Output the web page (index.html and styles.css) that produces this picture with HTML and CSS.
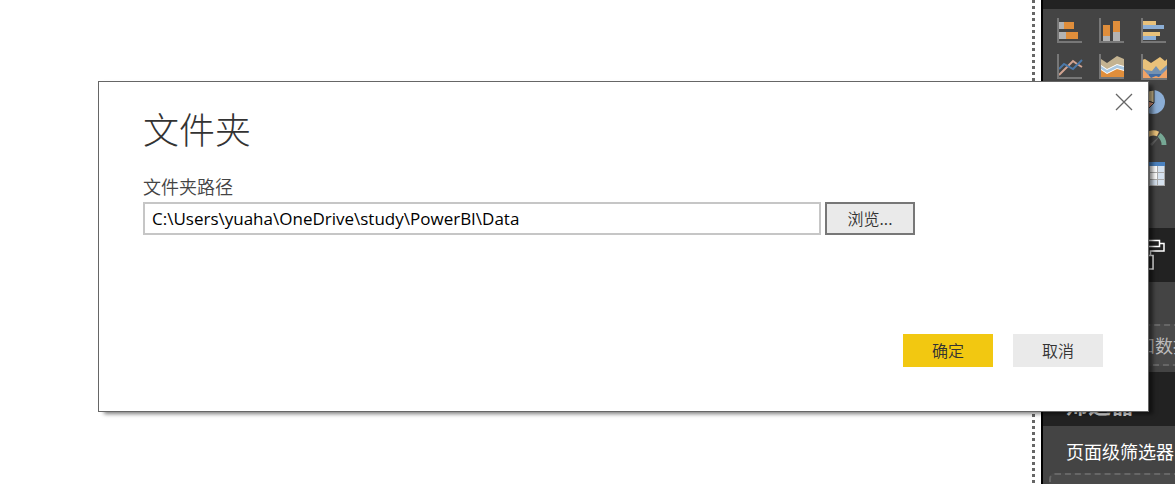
FILE: index.html
```html
<!DOCTYPE html>
<html lang="zh-CN">
<head>
<meta charset="utf-8">
<title>文件夹</title>
<link rel="stylesheet" href="styles.css">
</head>
<body>
<div class="workspace">
  <main class="canvas">
    <svg class="canvas-edge" aria-hidden="true"><defs><pattern id="dots" width="3" height="6" patternUnits="userSpaceOnUse"><rect width="3" height="3" fill="#666"/></pattern></defs><rect width="3" height="100%" fill="url(#dots)"/></svg>
  </main>
  <aside class="panel">
    <div class="panel-top"></div>
    <div class="visuals">
      <svg viewBox="0 0 26 26"><path fill="#b3b3b3" d="M2 4h5v7H2zM2 14h7v7H2z"/><path fill="#e08e3b" d="M7 4h10v7H7zM9 14h12v7H9z"/><path class="axis" d="M1 0v24h24"/></svg>
      <svg viewBox="0 0 26 26"><path fill="#b3b3b3" d="M4 18h7v5H4zM14 14h7v9h-7z"/><path fill="#e08e3b" d="M4 7h7v11H4zM14 3h7v11h-7z"/><path class="axis" d="M1 0v24h24"/></svg>
      <svg viewBox="0 0 26 26"><path fill="#e9c17a" d="M2 3h13v4H2zM2 14h17v4H2z"/><path fill="#8caed5" d="M2 7h21v4H2zM2 18h13v4H2z"/><path class="axis" d="M1 0v24h24"/></svg>
      <svg viewBox="0 0 26 26"><path class="line" stroke="#d2a391" d="M2 21L16 7l4 3 5 3"/><path class="line" stroke="#4b78a9" d="M2 15l5-5 9 5 9-9"/><path class="axis" d="M1 0v24h24"/></svg>
      <svg viewBox="0 0 26 26"><path fill="#c4b391" d="M2 5l6 4 10-7 7 3v19H2z"/><path fill="#fff" d="M2 11l6 4 10-5 7 2v12H2z"/><path fill="#a9c7df" d="M2 12l6 4 10-5 7 2v11H2z"/><path fill="#fff" d="M2 15l6 4 10-5 7 2v8H2z"/><path fill="#e08e3b" d="M2 16l6 4 10-5 7 2v7H2z"/><path class="axis" d="M1 0v24h24"/></svg>
      <svg viewBox="0 0 26 26"><path fill="#e9c17a" d="M1 6l3-1 6 4 9-6 5 4 2-2v19H1z"/><path fill="#7491b1" d="M1 14l4 2 6 1 4-5 4 5 7-6v13H1z"/><path fill="#416ca5" d="M8 20h12v4H8z"/><path fill="#f0a366" d="M1 14l9 10H1zM10 24l5-2 5 2zM17 24l9-9v9z"/><path class="axis" d="M1 0v25h25"/></svg>
      <svg class="col3" viewBox="0 0 26 26"><circle cx="12" cy="12" r="12" fill="#8caed5"/><path fill="#d8c394" stroke="#333" d="M13 13V0A12 12 0 0 0 1 9z"/><path fill="#e59c80" stroke="#333" d="M13 13L1 9l4 12z"/></svg>
      <svg class="col3" viewBox="0 0 26 26"><g fill="none" stroke-width="5"><path stroke="#8caed5" d="M2 19a11 11 0 0 1 3-8"/><path stroke="#e9c17a" d="M6 9a11 11 0 0 1 11-1"/><path stroke="#76a895" d="M18 9a12 12 0 0 1 5 10"/></g><path fill="#666" d="M9 18l10-8-8 10z"/></svg>
      <svg class="col3" viewBox="0 0 26 26"><path fill="#fff" d="M0 0h24v24H0z"/><path fill="#d6e2ef" d="M16 4h8v20h-8zM8 18h8v6H8z"/><path fill="#4b82c0" d="M0 0h24v4H0z"/><path fill="none" stroke="#aaa" d="M0 10.500h24M0 17.500h24M0 23.500h24M8.500 4v20M16.500 4v20M23.500 4v20"/></svg>
    </div>
    <div class="tabs">
      <svg viewBox="0 0 30 32" fill="none" stroke="#fff" stroke-width="1.500"><path d="M3 1.500h20.500v6H3M24 4.500h4V12H14.500v4M11 16.500h6V30h-6z"/></svg>
    </div>
    <section class="fields"><div class="drop-zone">和数据</div></section>
    <h2 class="filters-title">筛选器</h2>
    <section class="filters"><h3 class="filters-label">页面级筛选器</h3><div class="drop-zone"></div></section>
  </aside>
</div>
<div class="overlay">
  <form class="dialog" role="dialog" aria-labelledby="title">
    <button class="close" type="button" aria-label="关闭"><svg viewBox="0 0 18 18"><path d="M1 1l16 16M17 1L1 17" stroke="#666" stroke-width="1.300"/></svg></button>
    <h1 class="title" id="title">文件夹</h1>
    <label class="label" for="path">文件夹路径</label>
    <div class="path-row">
      <input class="path" id="path" type="text" value="C:\Users\yuaha\OneDrive\study\PowerBI\Data">
      <button class="button browse" type="button">浏览...</button>
    </div>
    <div class="actions">
      <button class="button primary" type="submit">确定</button>
      <button class="button" type="button">取消</button>
    </div>
  </form>
</div>
</body>
</html>
```
FILE: styles.css
```css
* { box-sizing: border-box; }
body {
  margin: 0;
  font-family: "Noto Sans CJK SC", sans-serif;
  background: #fff;
  color: #333;
}
h1, h2, h3 { margin: 0; font-weight: 400; }
.workspace {
  display: flex;
  height: 100vh;
  overflow: hidden;
}
.canvas {
  flex: 1;
  display: flex;
  justify-content: flex-end;
  padding-right: 6px;
}
.canvas-edge { width: 3px; height: 100%; }
.panel {
  width: 134px;
  border-left: 2px solid #000;
  background: #444;
  overflow: hidden;
  white-space: nowrap;
}
.panel-top { height: 9px; background: #222; }
.visuals {
  display: grid;
  grid-template-columns: repeat(3, 26px);
  gap: 10px 16px;
  height: 219px;
  padding: 9px 14px;
  align-content: start;
}
.visuals svg { width: 26px; height: 26px; }
.col3 { grid-column: 3; }
.axis { fill: none; stroke: #777; stroke-width: 2; }
.line { fill: none; stroke-width: 2; }
.tabs {
  display: flex;
  justify-content: flex-end;
  height: 54px;
  padding: 11px 9px;
  background: #222;
}
.tabs svg { width: 30px; height: 32px; }
.fields { height: 90px; padding: 42px 0 0 6px; }
.drop-zone {
  width: 200px;
  height: 42px;
  padding-left: 86px;
  border: 2px dashed #666;
  border-radius: 6px;
  background: #4a4a4a;
  color: #bbb;
  font-size: 18px;
  line-height: 38px;
}
.filters-title {
  height: 54px;
  padding: 14px 0 0 22px;
  background: #222;
  color: #ddd;
  font-size: 23px;
  font-weight: 700;
  line-height: 34px;
}
.filters { padding: 11px 0 0 6px; }
.filters-label {
  padding-left: 17px;
  margin-bottom: 8px;
  color: #fff;
  font-size: 18px;
  line-height: 28px;
}
.overlay {
  position: absolute;
  inset: 0;
  padding: 81px 26px 0 98px;
}
.dialog {
  position: relative;
  padding: 26px 45px 44px 44px;
  border: 1px solid #666;
  background: #fff;
  box-shadow: 5px 3px 4px -1px rgba(0, 0, 0, 0.5);
}
.title {
  margin-bottom: 26px;
  font-size: 36px;
  font-weight: 300;
  line-height: 40px;
}
.label {
  display: block;
  margin-bottom: 4px;
  color: #444;
  font-size: 18px;
  font-weight: 350;
  line-height: 24px;
}
.path-row {
  display: flex;
  gap: 4px;
  max-width: 772px;
  margin-bottom: 99px;
}
.path {
  flex: 1;
  min-width: 0;
  height: 33px;
  padding: 0 7px;
  border: 2px solid #c6c6c6;
  background: #fff;
  color: #000;
  font-family: "Open Sans", "Noto Sans CJK SC", sans-serif;
  font-size: 17px;
}
.button {
  width: 90px;
  height: 33px;
  padding: 0 0 2px;
  border: 0;
  background: #eaeaea;
  color: #333;
  font-family: inherit;
  font-size: 16px;
  font-weight: 350;
  line-height: 24px;
}
.browse { border: 2px solid #777; }
.primary { background: #f2c811; }
.actions {
  display: flex;
  justify-content: flex-end;
  gap: 20px;
}
.close {
  position: absolute;
  top: 4px;
  right: 8px;
  display: flex;
  align-items: center;
  justify-content: center;
  width: 32px;
  height: 32px;
  padding: 0;
  border: 0;
  background: none;
}
.close svg { width: 18px; height: 18px; }
```
